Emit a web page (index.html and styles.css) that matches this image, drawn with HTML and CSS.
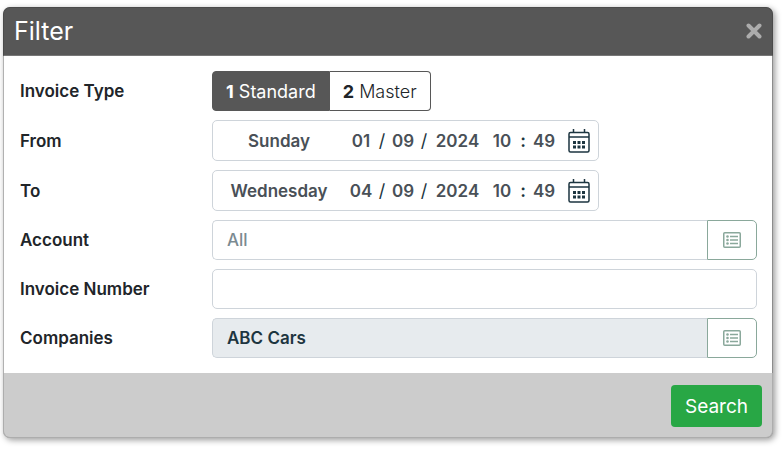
FILE: index.html
```html
<!DOCTYPE html>
<html lang="en">
<head>
    <meta charset="utf-8">
    <meta name="viewport" content="width=device-width, initial-scale=1">
    <title>Filter</title>
    <link rel="stylesheet" href="styles.css">
</head>
<body>
    <form class="modal">
        <div class="modal-header">
            <h1>Filter</h1>
            <button type="button" class="close" aria-label="Close">
                <svg width="16" height="16" viewBox="0 0 16 16"><path d="M2.5 2.5l11 11M13.5 2.5l-11 11"/></svg>
            </button>
        </div>

        <div class="modal-body">
            <div class="form-row">
                <span class="label" id="typeLabel">Invoice Type</span>
                <div class="btn-group" role="group" aria-labelledby="typeLabel">
                    <button type="button" class="btn-toggle active"><b>1</b> Standard</button>
                    <button type="button" class="btn-toggle"><b>2</b> Master</button>
                </div>
            </div>

            <div class="form-row">
                <label class="label" for="fromDay">From</label>
                <div class="date-box">
                    <input type="text" class="day" id="fromDay" value="Sunday">
                    <input type="text" class="num" aria-label="From date" value="01">
                    <span class="sep">/</span>
                    <input type="text" class="num" aria-label="From month" value="09">
                    <span class="sep">/</span>
                    <input type="text" class="year" aria-label="From year" value="2024">
                    <input type="text" class="num" aria-label="From hour" value="10">
                    <span class="sep colon">:</span>
                    <input type="text" class="num" aria-label="From minute" value="49">
                    <button type="button" class="btn-calendar" aria-label="Pick from date">
                        <svg width="22" height="24" viewBox="0 0 22 24">
                            <rect class="line" x="1" y="3.5" width="20" height="19.5" rx="1.5"/>
                            <path class="line" d="M1 8h20M5.5 0v3.5M16.5 0v3.5"/>
                            <path d="M5 12h3v3H5zM9.5 12h3v3h-3zM14 12h3v3h-3zM5 16.5h3v3H5zM9.5 16.5h3v3h-3zM14 16.5h3v3h-3z"/>
                        </svg>
                    </button>
                </div>
            </div>

            <div class="form-row">
                <label class="label" for="toDay">To</label>
                <div class="date-box">
                    <input type="text" class="day" id="toDay" value="Wednesday">
                    <input type="text" class="num" aria-label="To date" value="04">
                    <span class="sep">/</span>
                    <input type="text" class="num" aria-label="To month" value="09">
                    <span class="sep">/</span>
                    <input type="text" class="year" aria-label="To year" value="2024">
                    <input type="text" class="num" aria-label="To hour" value="10">
                    <span class="sep colon">:</span>
                    <input type="text" class="num" aria-label="To minute" value="49">
                    <button type="button" class="btn-calendar" aria-label="Pick to date">
                        <svg width="22" height="24" viewBox="0 0 22 24">
                            <rect class="line" x="1" y="3.5" width="20" height="19.5" rx="1.5"/>
                            <path class="line" d="M1 8h20M5.5 0v3.5M16.5 0v3.5"/>
                            <path d="M5 12h3v3H5zM9.5 12h3v3h-3zM14 12h3v3h-3zM5 16.5h3v3H5zM9.5 16.5h3v3h-3zM14 16.5h3v3h-3z"/>
                        </svg>
                    </button>
                </div>
            </div>

            <div class="form-row">
                <label class="label" for="account">Account</label>
                <div class="input-group">
                    <input type="text" class="form-control" id="account" placeholder="All">
                    <button type="button" class="btn-list" aria-label="Choose account">
                        <svg width="18" height="16" viewBox="0 0 18 16">
                            <rect class="line" x="0.75" y="0.75" width="16.5" height="14.5" rx="1"/>
                            <path class="line" d="M7 4.5h8M7 8h8M7 11.5h8"/>
                            <circle cx="4.5" cy="4.5" r="1.3"/><circle cx="4.5" cy="8" r="1.3"/><circle cx="4.5" cy="11.5" r="1.3"/>
                        </svg>
                    </button>
                </div>
            </div>

            <div class="form-row">
                <label class="label" for="invoiceNumber">Invoice Number</label>
                <input type="text" class="form-control" id="invoiceNumber">
            </div>

            <div class="form-row">
                <label class="label" for="companies">Companies</label>
                <div class="input-group">
                    <input type="text" class="form-control" id="companies" value="ABC Cars" readonly>
                    <button type="button" class="btn-list" aria-label="Choose companies">
                        <svg width="18" height="16" viewBox="0 0 18 16">
                            <rect class="line" x="0.75" y="0.75" width="16.5" height="14.5" rx="1"/>
                            <path class="line" d="M7 4.5h8M7 8h8M7 11.5h8"/>
                            <circle cx="4.5" cy="4.5" r="1.3"/><circle cx="4.5" cy="8" r="1.3"/><circle cx="4.5" cy="11.5" r="1.3"/>
                        </svg>
                    </button>
                </div>
            </div>
        </div>

        <div class="modal-footer">
            <button type="submit" class="btn-search">Search</button>
        </div>
    </form>
</body>
</html>
```
FILE: styles.css
```css
* { box-sizing: border-box; margin: 0; padding: 0; }
body {
    padding: 7px 11px 11px 3px;
    font-family: Inter, "Liberation Sans", sans-serif;
    font-size: 17px;
    background: #fff;
    color: #212529;
}
button, input { font: inherit; color: inherit; }
button { background: none; border: none; cursor: pointer; }
svg { display: block; }
.modal {
    border: 1px solid rgba(0,0,0,0.2);
    border-radius: 7px;
    background: #fff;
    background-clip: padding-box;
    box-shadow: 2px 2px 6px rgba(0,0,0,0.4);
}
.modal-header {
    display: flex;
    align-items: center;
    justify-content: space-between;
    height: 49px;
    margin: -1px -1px 0;
    padding: 0 10px 2px;
    border: 1px solid #4b4b4b;
    border-bottom-color: #777;
    border-radius: 7px 7px 0 0;
    background: #575757;
    color: #fff;
}
.modal-header h1 { font-size: 25px; font-weight: 400; line-height: 30px; }
.close svg { fill: none; stroke: #acacac; stroke-width: 4; stroke-linecap: round; }
.modal-body {
    display: flex;
    flex-direction: column;
    gap: 9px;
    padding: 15px 15px 15px 16px;
}
.form-row { display: grid; grid-template-columns: 192px 1fr; align-items: center; }
.label { font-weight: 600; }
.btn-group { display: flex; height: 40px; }
.btn-toggle {
    padding: 0 13px;
    border: 1px solid #575757;
    font-size: 18px;
    font-weight: 300;
}
.btn-toggle:first-child { border-radius: 4px 0 0 4px; }
.btn-toggle:last-child { border-left: none; border-radius: 0 4px 4px 0; }
.btn-toggle.active { background: #575757; color: #fff; font-weight: 400; }
.btn-toggle b { font-weight: 700; }
.date-box {
    display: flex;
    align-items: center;
    justify-self: start;
    height: 41px;
    border: 1px solid #ced4da;
    border-radius: 5px;
    color: #495057;
    font-weight: 600;
}
.date-box input { border: none; background: none; text-align: center; }
.date-box .day { width: 132px; }
.date-box .num { width: 32px; }
.date-box .year { width: 57px; }
.sep { width: 10px; text-align: center; color: #1d3540; font-size: 18px; font-weight: 400; }
.sep.colon { font-weight: 600; }
.btn-calendar { padding: 0 8px; }
.btn-calendar svg { fill: #1d3540; }
.btn-calendar .line { fill: none; stroke: #1d3540; stroke-width: 1.5; }
.input-group { display: flex; }
.form-control {
    flex: 1;
    min-width: 0;
    height: 40px;
    padding: 0 14px;
    border: 1px solid #ced4da;
    border-radius: 5px;
    color: #1d3540;
    font-weight: 600;
}
.form-control::placeholder { color: #7b8a91; font-weight: 500; opacity: 1; }
.form-control:read-only { background: #e7ebee; }
.input-group .form-control { border-right: none; border-radius: 5px 0 0 5px; }
.btn-list {
    display: flex;
    align-items: center;
    justify-content: center;
    width: 50px;
    border: 1px solid #8aa89b;
    border-radius: 0 5px 5px 0;
}
.btn-list svg { fill: #8aa89b; }
.btn-list .line { fill: none; stroke: #8aa89b; stroke-width: 1.5; }
.modal-footer {
    display: flex;
    justify-content: flex-end;
    margin: 0 -1px -1px;
    padding: 12px 10px 10px;
    border: 1px solid #adadad;
    border-top: none;
    border-radius: 0 0 7px 7px;
    background: #ccc;
}
.btn-search {
    height: 42px;
    padding: 0 14px;
    border-radius: 4px;
    background: #28a745;
    color: #fff;
    font-size: 19px;
}
```
